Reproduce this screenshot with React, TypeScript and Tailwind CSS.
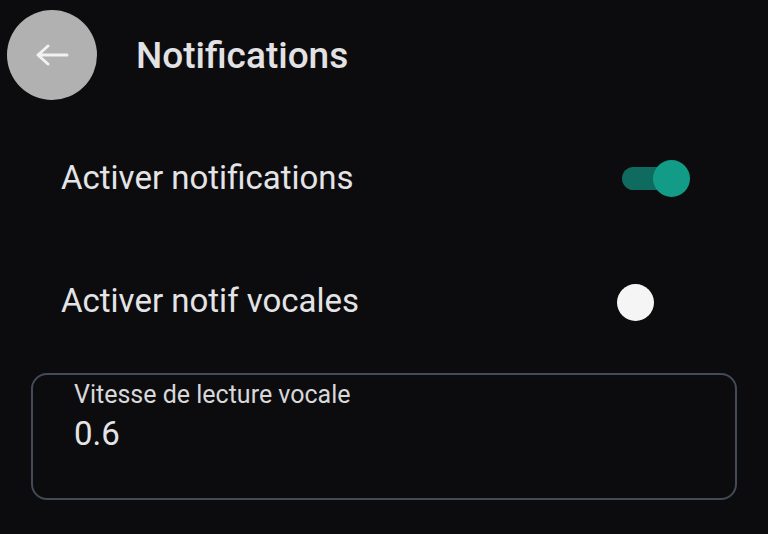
import React from "react";

export default function App() {
  return (
    <div
      className="w-[768px] h-[534px] bg-[#0c0c0e] overflow-hidden text-[#e4e4e6]"
      style={{ fontFamily: "Roboto, 'Noto Sans', sans-serif" }}
    >
      <div className="flex items-center h-[110px] pl-[7px]">
        <div className="w-[90px] h-[90px] rounded-full bg-[#b1b1b1] flex items-center justify-center">
          <svg width="36" height="24" viewBox="0 0 36 24" fill="none">
            <path d="M33 12H4M14 3L4 12l10 9" stroke="#f2f2f2" strokeWidth="3" strokeLinecap="round" strokeLinejoin="round" />
          </svg>
        </div>
        <div className="ml-[39px] text-[37px] leading-[44px] font-medium text-[#e2e2e4] mt-[2px]">Notifications</div>
      </div>
      <div className="flex items-center justify-between h-[60px] mt-[38px] pl-[61px] pr-[78px]">
        <div className="text-[33px] leading-[40px]">Activer notifications</div>
        <div className="relative w-[68px] h-[37px] flex items-center">
          <div className="w-[58px] h-[23px] rounded-full bg-[#0f6b5f]" />
          <div className="absolute right-0 top-0 w-[37px] h-[37px] rounded-full bg-[#129c88]" />
        </div>
      </div>
      <div className="flex items-center justify-between h-[60px] mt-[63px] pl-[61px] pr-[114px]">
        <div className="text-[33px] leading-[40px]">Activer notif vocales</div>
        <div className="w-[37px] h-[37px] rounded-full bg-[#f5f5f5] mt-[2px]" />
      </div>
      <div className="px-[31px] mt-[42px]">
        <div className="h-[127px] rounded-[16px] border-2 border-[#434a58] pl-[41px] pt-[5px]">
          <div className="text-[25px] leading-[30px] text-[#d8d8da]">Vitesse de lecture vocale</div>
          <div className="text-[33px] leading-[40px] mt-[4px] text-[#e4e4e6]">0.6</div>
        </div>
      </div>
    </div>
  );
}
